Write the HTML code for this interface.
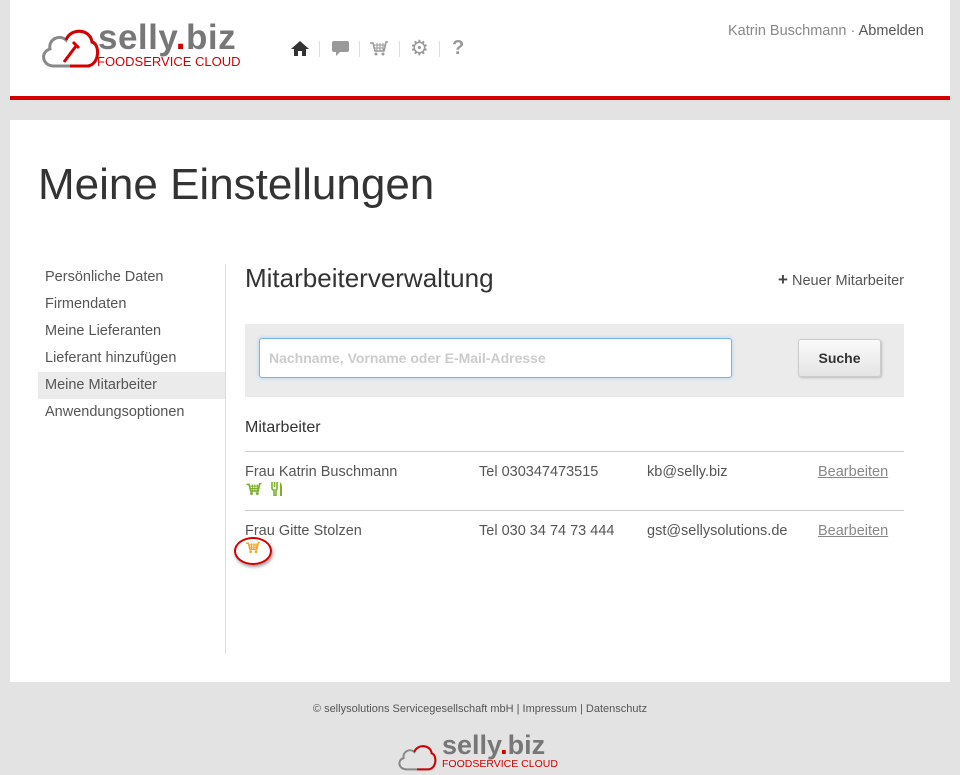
<!DOCTYPE html>
<html><head><meta charset="utf-8"><style>
body{margin:0;width:960px;height:775px;background:#e3e3e3;font-family:"Liberation Sans",sans-serif;color:#444;position:relative;overflow:hidden}
.abs{position:absolute}
.hdr{left:10px;top:0;width:940px;height:96px;background:#fff;border-bottom:4px solid #d40000}
.main{left:10px;top:120px;width:940px;height:562px;background:#fff}
.nav a{display:block;font-size:14.5px;color:#555;height:27px;line-height:27px;padding-left:7px}
.sep{width:1px;height:16px;background:#ddd;top:41px}
.t14{font-size:14.5px;color:#555}
</style></head><body>
<div class="abs hdr">
 <svg class="abs" style="left:30px;top:22px" width="60" height="48" viewBox="0 0 60 48"><path d="M14 44 C2 44 0 30 10 27 C8 17 20 12 26 18 C30 6 50 6 52 20 C60 22 60 42 48 44 Z" fill="none" stroke="#888" stroke-width="3"/><path d="M26 18 C30 6 50 6 52 20 C60 22 60 42 48 44 L30 44" fill="none" stroke="#d40000" stroke-width="3"/><path d="M24 40 L36 24 M33 20 l6 6" stroke="#d40000" stroke-width="3"/></svg>
 <div class="abs" style="left:88px;top:18px;font-size:35px;font-weight:bold;color:#777;letter-spacing:0.5px">selly<span style="color:#d40000">.</span>biz</div>
 <div class="abs" style="left:87px;top:54px;font-size:13px;color:#d40000">FOODSERVICE CLOUD</div>
 <svg class="abs" style="left:280px;top:40px" width="20" height="17" viewBox="0 0 20 17"><path d="M10 1 L1 9 L4 9 L4 16 L8 16 L8 11 L12 11 L12 16 L16 16 L16 9 L19 9 Z" fill="#333"/></svg>
 <div class="abs sep" style="left:309px"></div>
 <svg class="abs" style="left:321px;top:40px" width="19" height="17" viewBox="0 0 19 17"><path d="M3 1 H16 Q18 1 18 3 V10 Q18 12 16 12 H9 L5 16 L5 12 H3 Q1 12 1 10 V3 Q1 1 3 1 Z" fill="#999"/></svg>
 <div class="abs sep" style="left:349px"></div>
 <svg class="abs" style="left:359px;top:40px" width="20" height="17" viewBox="0 0 20 17"><path d="M1 3 H4 L6 11 H15 L17 2 H19" fill="none" stroke="#999" stroke-width="1.6"/><path d="M5 5 H16 M5.5 8 H15.5 M8 3 V11 M11 3 V11 M14 3 V11" stroke="#999" stroke-width="1"/><circle cx="7" cy="14" r="1.5" fill="#999"/><circle cx="14" cy="14" r="1.5" fill="#999"/></svg>
 <div class="abs sep" style="left:389px"></div>
 <div class="abs" style="left:400px;top:36px;font-size:21px;color:#999">&#9881;</div>
 <div class="abs sep" style="left:429px"></div>
 <div class="abs" style="left:442px;top:37px;font-size:20px;font-weight:bold;color:#999">?</div>
 <div class="abs" style="left:718px;top:23px;font-size:14.5px;color:#888">Katrin Buschmann · <span style="color:#555">Abmelden</span></div>
</div>
<div class="abs main">
 <div class="abs" style="left:28px;top:40px;font-size:44px;color:#333">Meine Einstellungen</div>
 <div class="abs nav" style="left:28px;top:144px;width:187px">
  <a>Persönliche Daten</a><a>Firmendaten</a><a>Meine Lieferanten</a><a>Lieferant hinzufügen</a><a style="background:#ebebeb">Meine Mitarbeiter</a><a>Anwendungsoptionen</a>
 </div>
 <div class="abs" style="left:215px;top:144px;width:1px;height:390px;background:#ddd"></div>
 <div class="abs" style="left:235px;top:143px;font-size:26px;color:#333">Mitarbeiterverwaltung</div>
 <div class="abs t14" style="left:757px;top:150px;width:137px;text-align:right"><b style="font-size:17px;color:#444">+</b> Neuer Mitarbeiter</div>
 <div class="abs" style="left:235px;top:204px;width:659px;height:73px;background:#ebebeb">
  <div class="abs" style="left:14px;top:14px;width:471px;height:38px;background:#fff;border:1px solid #7ab3e8;border-radius:3px;box-shadow:0 0 4px #aad0f0"><span class="abs" style="left:9px;top:11px;font-size:14px;font-weight:bold;color:#ccc">Nachname, Vorname oder E-Mail-Adresse</span></div>
  <div class="abs" style="left:553px;top:15px;width:81px;height:36px;background:linear-gradient(#fafafa,#e4e4e4);border:1px solid #ccc;border-radius:3px;box-shadow:1px 1px 2px #bbb;text-align:center;line-height:36px;font-size:14px;font-weight:bold;color:#333">Suche</div>
 </div>
 <div class="abs" style="left:235px;top:299px;font-size:16px;color:#333">Mitarbeiter</div>
 <div class="abs" style="left:235px;top:331px;width:659px;height:1px;background:#ccc"></div>
 <div class="abs t14" style="left:235px;top:344px">Frau Katrin Buschmann</div>
 <svg class="abs" style="left:235px;top:362px" width="18" height="14" viewBox="0 0 20 17"><path d="M1 3 H4 L6 11 H15 L17 2 H19" fill="none" stroke="#7bb02a" stroke-width="2"/><path d="M5 5 H16 M5.5 8 H15.5 M8 3 V11 M11 3 V11 M14 3 V11" stroke="#7bb02a" stroke-width="1.3"/><circle cx="7" cy="14" r="1.8" fill="#7bb02a"/><circle cx="14" cy="14" r="1.8" fill="#7bb02a"/></svg>
 <svg class="abs" style="left:261px;top:362px" width="12" height="14" viewBox="0 0 12 14"><path d="M1 0 V6 Q1 8 3 8 V14 H5 V8 Q6 8 6 6 V0 M3.5 0 V5" fill="none" stroke="#7bb02a" stroke-width="1.6"/><path d="M8 0 Q11 0 11 6 V14 H9 V0 Z" fill="#7bb02a"/></svg>
 <div class="abs t14" style="left:469px;top:344px">Tel 030347473515</div>
 <div class="abs t14" style="left:637px;top:344px">kb@selly.biz</div>
 <div class="abs t14" style="left:808px;top:344px;color:#888;text-decoration:underline">Bearbeiten</div>
 <div class="abs" style="left:235px;top:390px;width:659px;height:1px;background:#ccc"></div>
 <div class="abs t14" style="left:235px;top:403px">Frau Gitte Stolzen</div>
 <div class="abs t14" style="left:469px;top:403px">Tel 030 34 74 73 444</div>
 <div class="abs t14" style="left:637px;top:403px">gst@sellysolutions.de</div>
 <div class="abs t14" style="left:808px;top:403px;color:#888;text-decoration:underline">Bearbeiten</div>
 <div class="abs" style="left:224px;top:417px;width:34px;height:24px;border:2px solid #d40000;border-radius:50%;box-shadow:1px 2px 3px #999"></div>
 <svg class="abs" style="left:235px;top:421px" width="16" height="13" viewBox="0 0 20 17"><path d="M1 3 H4 L6 11 H15 L17 2 H19" fill="none" stroke="#f0a820" stroke-width="2"/><path d="M5 5 H16 M5.5 8 H15.5 M8 3 V11 M11 3 V11 M14 3 V11" stroke="#f0a820" stroke-width="1.3"/><circle cx="7" cy="14" r="1.8" fill="#f0a820"/><circle cx="14" cy="14" r="1.8" fill="#f0a820"/></svg>
</div>
<div class="abs" style="left:0;top:703px;width:960px;text-align:center;font-size:11px;color:#555">© sellysolutions Servicegesellschaft mbH | Impressum | Datenschutz</div>
<svg class="abs" style="left:394px;top:740px" width="46" height="32" viewBox="0 0 60 48"><path d="M14 44 C2 44 0 30 10 27 C8 17 20 12 26 18 C30 6 50 6 52 20 C60 22 60 42 48 44 Z" fill="none" stroke="#888" stroke-width="3"/><path d="M26 18 C30 6 50 6 52 20 C60 22 60 42 48 44 L30 44" fill="none" stroke="#d40000" stroke-width="3"/></svg>
<div class="abs" style="left:442px;top:730px;font-size:27px;font-weight:bold;color:#777">selly<span style="color:#d40000">.</span>biz</div>
<div class="abs" style="left:442px;top:758px;font-size:10.5px;color:#d40000">FOODSERVICE CLOUD</div>
</body></html>
